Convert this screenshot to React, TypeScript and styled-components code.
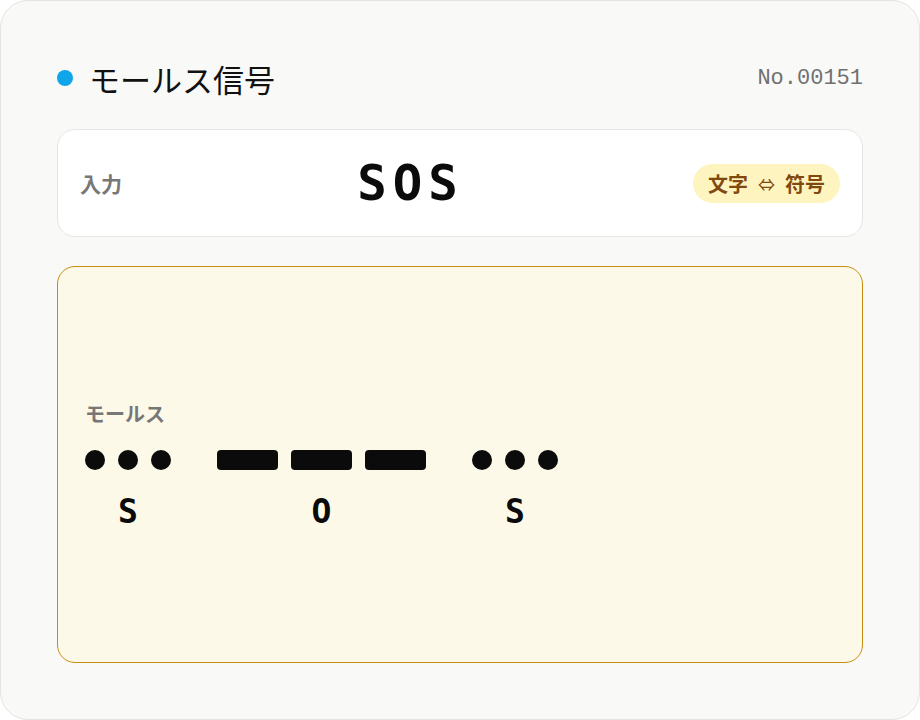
import styled, { createGlobalStyle } from 'styled-components'

const GlobalStyle = createGlobalStyle`
  html, body {
    margin: 0;
    padding: 0;
    background: #ffffff;
  }
  body {
    font-family: "Noto Sans CJK JP", "Noto Sans", sans-serif;
  }
`

const MONO = `"DejaVu Sans Mono", "Liberation Mono", monospace`

const MORSE: Record<string, string> = {
  S: '...',
  O: '---',
}

const Card = styled.div`
  box-sizing: border-box;
  width: 920px;
  height: 720px;
  background: #f9f9f8;
  border: 1px solid #e4e4e2;
  border-radius: 28px;
  padding: 54px 56px 56px;
  display: flex;
  flex-direction: column;
`

const Header = styled.header`
  display: flex;
  align-items: center;
  justify-content: space-between;
  height: 46px;
`

const Title = styled.h1`
  display: flex;
  align-items: center;
  gap: 16px;
  margin: 0;
  font-size: 31px;
  font-weight: 400;
  color: #111;
`

const Dot = styled.span`
  width: 16px;
  height: 16px;
  border-radius: 50%;
  background: #0ea5e9;
`

const Serial = styled.span`
  font-family: "Liberation Mono", monospace;
  font-size: 22px;
  color: #707070;
`

const InputCard = styled.section`
  margin-top: 28px;
  height: 108px;
  box-sizing: border-box;
  background: #fff;
  border: 1px solid #e5e5e3;
  border-radius: 18px;
  padding: 0 22px 0 22px;
  display: flex;
  align-items: center;
`

const Label = styled.span<{ $size?: number }>`
  font-size: ${p => p.$size ?? 21}px;
  font-weight: 700;
  color: #777;
`

const Word = styled.span`
  flex: 1;
  text-align: center;
  font-family: ${MONO};
  font-size: 49px;
  font-weight: 700;
  letter-spacing: 6px;
  text-indent: 6px;
  color: #0b0b0b;
`

const Toggle = styled.button`
  display: flex;
  align-items: center;
  gap: 10px;
  height: 39px;
  padding: 0 15px;
  border: none;
  border-radius: 20px;
  background: #fdf4c0;
  color: #82490e;
  font-family: "Noto Sans CJK JP", sans-serif;
  font-size: 20px;
  font-weight: 700;
`

const Arrow = styled.span`
  font-size: 17px;
  font-weight: 400;
`

const MorsePanel = styled.section`
  margin-top: 29px;
  flex: 1;
  box-sizing: border-box;
  background: #fdf9e8;
  border: 1px solid #c98d0f;
  border-radius: 18px;
  padding: 0 27px 1px;
  display: flex;
  flex-direction: column;
  justify-content: center;
`

const MorseLabel = styled(Label)`
  margin-bottom: 22px;
  line-height: 1.4;
`

const Groups = styled.div`
  display: flex;
  gap: 46px;
`

const Group = styled.div`
  display: flex;
  flex-direction: column;
  align-items: center;
`

const Signals = styled.div`
  display: flex;
  gap: 13px;
`

const Signal = styled.span<{ $dash: boolean }>`
  width: ${p => (p.$dash ? '61px' : '20px')};
  height: 20px;
  border-radius: ${p => (p.$dash ? '4px' : '50%')};
  background: #0b0b0b;
`

const Letter = styled.span`
  margin-top: 25px;
  font-family: ${MONO};
  font-size: 33px;
  font-weight: 700;
  line-height: 1;
  color: #0b0b0b;
`

export default function App() {
  const word = 'SOS'
  return (
    <>
      <GlobalStyle />
      <Card>
        <Header>
          <Title>
            <Dot />
            モールス信号
          </Title>
          <Serial>No.00151</Serial>
        </Header>
        <InputCard>
          <Label>入力</Label>
          <Word>{word}</Word>
          <Toggle>
            文字 <Arrow>⇔</Arrow> 符号
          </Toggle>
        </InputCard>
        <MorsePanel>
          <MorseLabel $size={20}>モールス</MorseLabel>
          <Groups>
            {word.split('').map((ch, i) => (
              <Group key={i}>
                <Signals>
                  {MORSE[ch].split('').map((s, j) => (
                    <Signal key={j} $dash={s === '-'} />
                  ))}
                </Signals>
                <Letter>{ch}</Letter>
              </Group>
            ))}
          </Groups>
        </MorsePanel>
      </Card>
    </>
  )
}
